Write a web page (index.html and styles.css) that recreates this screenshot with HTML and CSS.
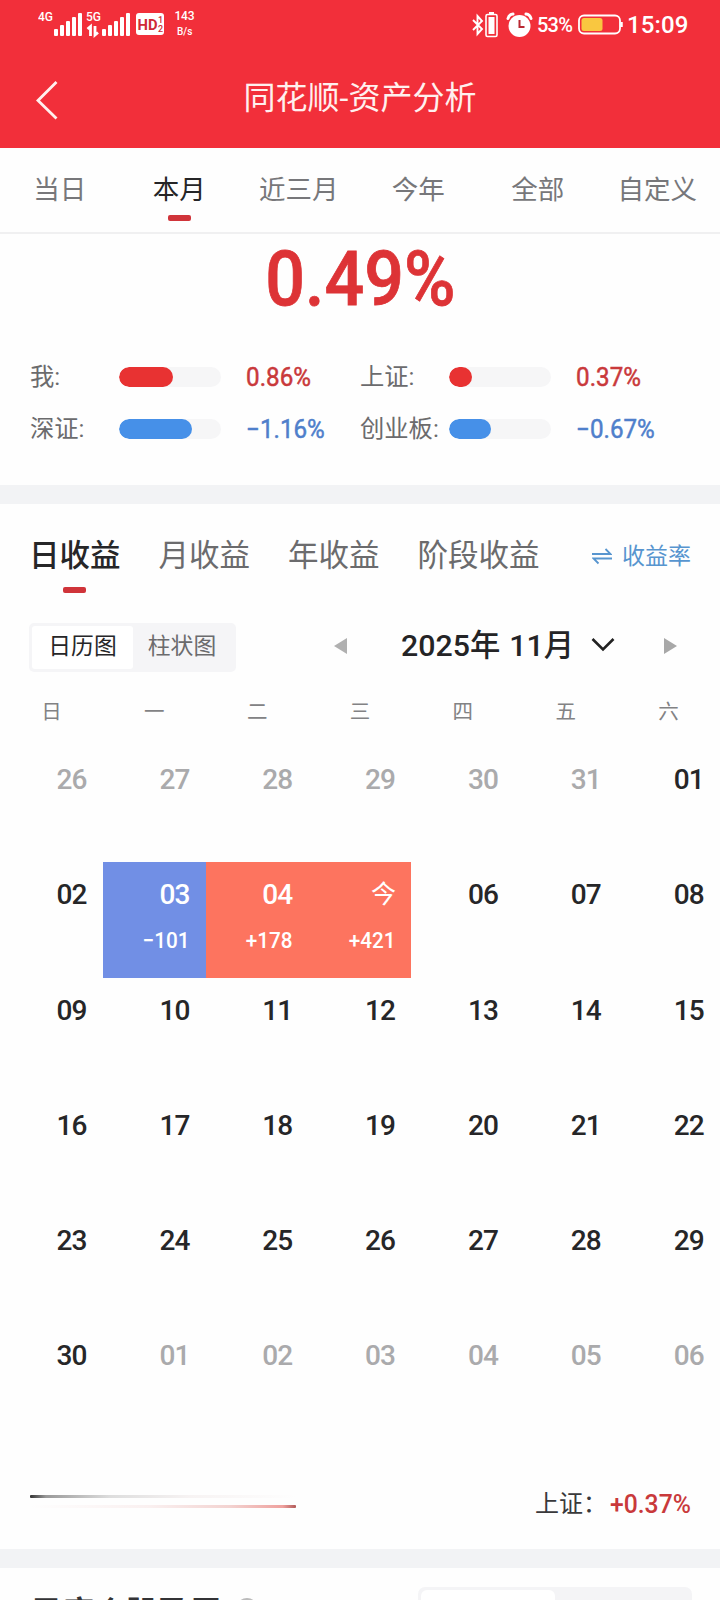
FILE: index.html
```
<!DOCTYPE html>
<html lang="zh-CN">
<head>
<meta charset="utf-8">
<title>同花顺-资产分析</title>
<link rel="stylesheet" href="styles.css">
</head>
<body>
<header class="top">
  <div class="status">
    <svg class="signals" width="160" height="36" viewBox="0 0 160 36">
      <g fill="#fff">
        <rect x="16" y="25" width="4" height="7" rx="1"/><rect x="22" y="21" width="4" height="11" rx="1"/><rect x="28" y="17" width="4" height="15" rx="1"/><rect x="34" y="13" width="4" height="19" rx="1"/><rect x="40" y="9" width="4" height="23" rx="1"/>
        <rect x="64" y="25" width="4" height="7" rx="1"/><rect x="70" y="21" width="4" height="11" rx="1"/><rect x="76" y="17" width="4" height="15" rx="1"/><rect x="82" y="13" width="4" height="19" rx="1"/><rect x="88" y="9" width="4" height="23" rx="1"/>
        <rect x="98" y="9" width="28" height="22" rx="3"/>
      </g>
      <path d="M49.500 25l3-2.500v9.500M57 22v9l3-2.500" fill="none" stroke="#fff" stroke-width="2.800"/>
      <g class="sig-text">
        <text x="0" y="17" fill="#fff">4G</text><text x="48" y="17" fill="#fff">5G</text>
        <text x="136.500" y="16" fill="#fff" textLength="20">143</text><text x="139" y="31" fill="#fff" class="rate">B/s</text>
        <text x="99.500" y="25.500" fill="#cf2a36" class="hd" textLength="20" lengthAdjust="spacingAndGlyphs">HD</text>
        <text x="120" y="19" fill="#cf2a36" class="sub">1</text><text x="120" y="27.500" fill="#cf2a36" class="sub">2</text>
      </g>
    </svg>
    <div class="status-right">
      <svg width="62" height="28" viewBox="0 0 62 28" fill="none" stroke="#fff">
        <path d="M1 9l9 9-4.500 5V5l4.500 5-9 9" stroke-width="1.900"/>
        <rect x="14" y="3.500" width="11" height="22" rx="1.500" stroke-width="1.600"/>
        <rect x="16.500" y="6" width="6" height="17" fill="#fff" stroke="none"/><path d="M17 2h5" stroke-width="2"/>
        <circle cx="47.500" cy="15" r="11" fill="#fff" stroke="none"/>
        <path d="M36 7.500q1-4 5-4.500M59 7.500q-1-4-5-4.500" stroke-width="3" stroke-linecap="round"/>
        <path d="M47.500 9v7h5" stroke="#b92731" stroke-width="2"/>
      </svg>
      <span class="battery-text">53%</span>
      <svg class="battery" width="45" height="22" viewBox="0 0 45 22"><rect x="1" y="1.500" width="41" height="18" rx="5" fill="none" stroke="#fff" stroke-width="1.800"/><rect x="3.500" y="4" width="21" height="13" rx="2.500" fill="#f9c740"/><path d="M43.500 8v5" stroke="#fff" stroke-width="2.500"/></svg>
      <span class="clock">15:09</span>
    </div>
  </div>
  <div class="titlebar">
    <svg width="24" height="40" viewBox="0 0 24 40"><path d="M20.500 2L2 20.500 20.500 38.500" fill="none" stroke="#fff0ee" stroke-width="2.800"/></svg>
    <h1>同花顺-资产分析</h1>
  </div>
</header>

<nav class="ranges">
  <a>当日</a><a class="on">本月</a><a>近三月</a><a>今年</a><a>全部</a><a>自定义</a>
</nav>

<section class="summary">
  <div class="rate-big"><span>0.49%</span></div>
  <div class="compare">
    <span>我:</span><div class="bar"><i class="up" style="width:54px"></i></div><b class="num red">0.86%</b>
    <span>上证:</span><div class="bar"><i class="up" style="width:23px"></i></div><b class="num red">0.37%</b>
    <span>深证:</span><div class="bar"><i class="down" style="width:73px"></i></div><b class="num blue">−1.16%</b>
    <span>创业板:</span><div class="bar"><i class="down" style="width:42px"></i></div><b class="num blue">−0.67%</b>
  </div>
</section>

<section class="profit">
  <div class="periods">
    <a class="on">日收益</a><a>月收益</a><a>年收益</a><a>阶段收益</a>
    <span class="switch"><svg width="20" height="18" viewBox="0 0 20 18" fill="none" stroke="#5795cf" stroke-width="1.800"><path d="M0 7h18.500l-5-5M20 11.500H1.500l5 5"/></svg><span>收益率</span></span>
  </div>
  <div class="tools">
    <div class="seg"><span class="on">日历图</span><span>柱状图</span></div>
    <svg class="prev" width="13" height="16" viewBox="0 0 13 16"><path d="M13 0v16L0 8z" fill="#b0b0b0"/></svg>
    <div class="month"><span>2025年</span><span>11月</span></div>
    <svg class="chev" width="24" height="16" viewBox="0 0 24 16"><path d="M1.500 2L12 12.500 22.500 2" fill="none" stroke="#222" stroke-width="2.600"/></svg>
    <svg class="next" width="13" height="16" viewBox="0 0 13 16"><path d="M0 0v16l13-8z" fill="#a8a8a8"/></svg>
  </div>
  <div class="week"><span>日</span><span>一</span><span>二</span><span>三</span><span>四</span><span>五</span><span>六</span></div>
  <div class="days">
    <div class="out">26</div><div class="out">27</div><div class="out">28</div><div class="out">29</div><div class="out">30</div><div class="out">31</div><div>01</div>
    <div>02</div><div class="loss">03<em>−101</em></div><div class="gain">04<em>+178</em></div><div class="gain"><span class="today">今</span><em>+421</em></div><div>06</div><div>07</div><div>08</div>
    <div>09</div><div>10</div><div>11</div><div>12</div><div>13</div><div>14</div><div>15</div>
    <div>16</div><div>17</div><div>18</div><div>19</div><div>20</div><div>21</div><div>22</div>
    <div>23</div><div>24</div><div>25</div><div>26</div><div>27</div><div>28</div><div>29</div>
    <div>30</div><div class="out">01</div><div class="out">02</div><div class="out">03</div><div class="out">04</div><div class="out">05</div><div class="out">06</div>
  </div>
  <div class="foot">
    <div class="fades"><i class="dark"></i><i class="warm"></i></div>
    <div class="index">上证：<b class="num red">+0.37%</b></div>
  </div>
</section>

<section class="stocks">
  <h2>日度个股盈亏</h2><i class="help"></i>
  <div class="seg2"><span class="on">数据图</span><span>列表</span></div>
</section>
</body>
</html>
```
FILE: styles.css
```
* { box-sizing: border-box; }
body {
  margin: 0;
  width: 720px;
  height: 1600px;
  overflow: hidden;
  background: #fefefe;
  color: #6b6b6d;
  font-family: Roboto, "Noto Sans CJK SC", sans-serif;
}
svg { display: block; flex: none; }
h1, h2 { margin: 0; font-weight: 400; }
i, em { font-style: normal; }

.top { height: 148px; background: #f22f3a; color: #fff; }
.status {
  height: 49px;
  padding: 4px 32px 0 38px;
  display: flex;
  justify-content: space-between;
}
.sig-text { font: 500 12px Roboto, sans-serif; }
.rate { font-size: 10px; }
.hd { font-size: 15px; font-weight: 700; }
.sub { font-size: 9px; }
.status-right { display: flex; align-items: center; height: 41px; padding-right: 1px; }
.battery-text { font-weight: 500; font-size: 20px; margin-left: 3px; width: 37px; letter-spacing: -0.8px; }
.battery { margin-left: 4px; }
.clock { font-weight: 500; font-size: 24px; margin-left: 4px; width: 60px; letter-spacing: 0.1px; white-space: nowrap; }
.titlebar { height: 98px; display: grid; grid-template-columns: 60px 1fr 60px; padding: 0 36px; align-items: center; }
.titlebar h1 { text-align: center; font-size: 32px; line-height: 40px; color: #fff0ee; padding-bottom: 1px; white-space: nowrap; }
.titlebar svg { margin-top: 4px; }

.ranges {
  height: 86px;
  padding: 0 3px 0 0;
  display: grid;
  grid-template-columns: repeat(6, 1fr);
  border-bottom: 2px solid #f0f0f1;
}
.ranges a { text-align: center; font-size: 26.5px; line-height: 40px; padding-top: 22px; color: #77777a; }
.on::after { content: ""; display: block; width: 23px; height: 6px; border-radius: 2px; background: #d0343a; margin: 0 auto; }
.ranges a.on { color: #252527; }
.ranges .on::after { margin-top: 5px; }

.summary { height: 270px; border-bottom: 19px solid #f2f3f5; }
.rate-big { height: 117px; text-align: center; color: #dd3336; font-weight: 500; font-size: 76px; line-height: 90px; }
.rate-big span { display: inline-block; transform: scaleX(0.92); -webkit-text-stroke: 0.8px; }
.compare {
  display: grid;
  grid-template-columns: 89px 102px 139px 89px 102px 1fr;
  grid-auto-rows: 52px;
  padding-left: 30px;
  align-items: center;
  font-size: 24.3px;
  line-height: 36px;
  white-space: nowrap;
}
.bar { height: 20px; border-radius: 10px; background: #f6f6f7; overflow: hidden; }
.bar i { display: block; height: 20px; border-radius: 10px; }
.up { background: #e83232; }
.down { background: #4690e8; }
.num { display: inline-block; font-weight: 500; font-size: 26px; transform: scaleX(0.93); transform-origin: 0 50%; }
.compare .num { padding-left: 27px; font-weight: 400; -webkit-text-stroke: 0.5px; }
.red { color: #c9393b; }
.blue { color: #4f7fcb; }

.profit { height: 1064px; border-bottom: 19px solid #f2f3f5; }
.periods { height: 110px; display: flex; padding: 29.5px 29px 0 29px; font-size: 30.5px; line-height: 44px; gap: 38px; white-space: nowrap; }
.periods .on { color: #262628; font-weight: 500; }
.periods .on::after { margin-top: 9.5px; }
.switch { margin-left: auto; display: flex; gap: 10px; color: #5795cf; font-size: 23px; align-items: center; height: 44px; }
.switch span { padding-top: 2px; }
.tools { display: flex; height: 62px; padding: 9px 43px 4px 29px; align-items: center; }
.seg { display: flex; width: 207px; height: 49px; padding: 3px; background: #f5f5f7; border-radius: 5px; font-size: 22.8px; line-height: 42px; }
.seg span { width: 101px; text-align: center; }
.seg span:last-child { width: 98px; }
.seg .on { background: #fff; border-radius: 3px; color: #262628; }
.seg .on::after, .seg2 .on::after { display: none; }
.prev { margin-left: 98px; margin-bottom: 3px; }
.month { margin-left: 54px; display: flex; gap: 9px; font-weight: 500; font-size: 30.3px; line-height: 40px; width: 172px; color: #242426; white-space: nowrap; padding-bottom: 3px; }
.chev { margin-left: 18px; margin-bottom: 5px; }
.next { margin-left: auto; margin-bottom: 3px; }
.week, .days { display: grid; grid-template-columns: repeat(7, 1fr); }
.week { height: 71px; text-align: center; font-size: 20.5px; line-height: 30px; padding-top: 21px; color: #828284; }
.days { grid-auto-rows: 115.25px; color: #262628; font-weight: 500; font-size: 28px; letter-spacing: -0.9px; }
.days div { text-align: right; padding: 15.2px 16.300px 0 0; line-height: 36px; }
.days .out { color: #aaaaac; }
.days .loss { background: #718fe5; color: #fff; }
.days .gain { background: #fd745f; color: #fff; }
.today { display: block; font-size: 25px; font-weight: 400; height: 36px; }
.days em { display: block; font-size: 22.5px; letter-spacing: 0; line-height: 30px; margin-top: 12px; transform: scaleX(0.92); transform-origin: 100% 50%; }
.foot { display: flex; justify-content: space-between; padding: 42px 29px 0 30px; }
.fades { width: 266px; padding-top: 14px; }
.fades i { display: block; height: 3px; margin-bottom: 7px; border-radius: 1px; }
.dark { background: linear-gradient(90deg, #333, #999 6%, #ddd 30%, #f7f3f3 60%, #fefefe); }
.warm { background: linear-gradient(270deg, #b05a58, #efa19e 5%, #f3d3d1 25%, #faf0f0 55%, #fefefe); }
.index { display: flex; font-size: 24px; line-height: 46px; color: #39393b; }
.index .num { font-size: 26px; width: 81px; transform: scaleX(0.95); margin-left: 3px; }

.stocks { height: 32px; display: flex; padding: 19px 28px 0 30px; overflow: hidden; }
.stocks h2 { font-size: 32px; font-weight: 700; line-height: 52px; color: #333335; width: 204px; white-space: nowrap; }
.help { width: 22px; height: 22px; border: 2px solid #bbb; border-radius: 50%; margin: 11px 0 0 2px; }
.seg2 { margin-left: auto; width: 274px; height: 49px; flex: none; display: flex; padding: 3px; border-radius: 7px; background: #f4f4f6; font-size: 22.5px; line-height: 45px; }
.seg2 span { flex: 1; text-align: center; }
.seg2 .on { background: #fff; border-radius: 6px; }
```
